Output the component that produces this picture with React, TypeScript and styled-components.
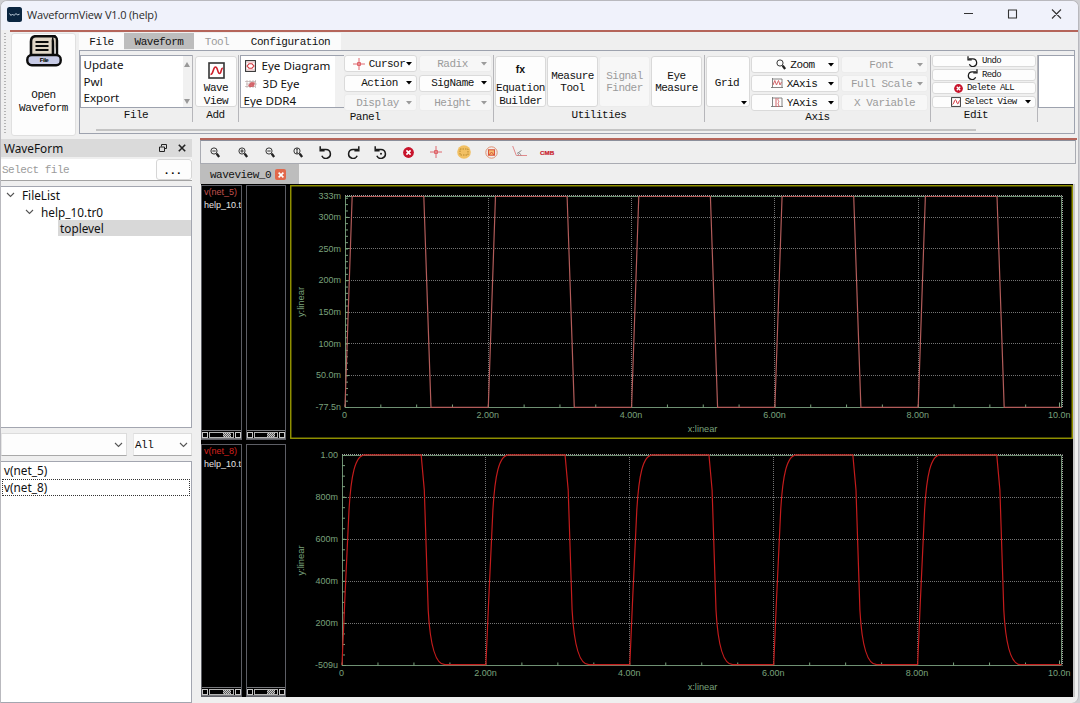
import React from "react";
import styled, { createGlobalStyle, css } from "styled-components";

const Global = createGlobalStyle`
  * { box-sizing: border-box; }
  html, body { margin: 0; padding: 0; background: #cfcfd3; overflow: hidden; }
`;

const mono = css`
  font-family: "Liberation Mono", monospace;
  font-size: 11px;
  letter-spacing: -0.5px;
`;
const sans = css`
  font-family: "Noto Sans", "Open Sans", sans-serif;
  font-size: 11.8px;
`;

const Window = styled.div`
  width: 1079px;
  height: 703px;
  border: 1px solid #b9b9be;
  border-width: 1px 1px 0 1px;
  border-radius: 7px 7px 7px 0;
  background: #efefef;
  overflow: hidden;
  display: flex;
  flex-direction: column;
  color: #111;
`;

const TitleBar = styled.header`
  height: 29px;
  flex: none;
  background: #f0f2fb;
  display: flex;
  align-items: center;
  padding: 0 2px 3px 6px;
`;
const Title = styled.span`
  font: 11px "Open Sans", "Noto Sans", sans-serif;
  letter-spacing: -0.15px;
  color: #2a2a2a;
  margin-left: 5px;
  flex: 1;
  white-space: nowrap;
`;
const RedLine = styled.div<{ $left?: number }>`
  height: 2px;
  flex: none;
  margin-left: ${(p) => p.$left ?? 0}px;
  background: #b5655a;
`;

const Ribbon = styled.section`
  height: 104px;
  flex: none;
  display: flex;
`;
const Handle = styled.div`
  width: 10px;
  flex: none;
  padding: 1px 0 0 3px;
  &::before {
    content: "";
    display: block;
    height: 101px;
    width: 2px;
    background: repeating-linear-gradient(#b4b4b4 0 1px, transparent 1px 3px);
  }
`;
const OpenButton = styled.button`
  ${mono}
  width: 65px;
  height: 103px;
  margin-top: 1px;
  padding: 1px 0 0;
  border: 1px solid #e0e0e0;
  border-radius: 3px;
  background: #fdfdfd;
  display: flex;
  flex-direction: column;
  align-items: center;
  line-height: 12.5px;
  color: #111;
  svg { margin-bottom: 22px; }
`;
const RibbonMain = styled.div`
  flex: 1;
  margin: 0 3px 0 3px;
  min-width: 0;
`;
const Tabs = styled.nav`
  display: flex;
  height: 18px;
  padding-top: 1px;
`;
const Tab = styled.span<{ $w: number; $active?: boolean; $off?: boolean }>`
  ${mono}
  width: ${(p) => p.$w}px;
  height: ${(p) => (p.$active ? 16 : 17)}px;
  line-height: 18px;
  text-align: center;
  background: ${(p) => (p.$active ? "#bdbdbd" : "#fbfbfb")};
  color: ${(p) => (p.$off ? "#9b9b9b" : "#111")};
`;
const Panel = styled.div`
  height: 84px;
  border: 1px solid #9da2ae;
  display: flex;
  flex-direction: column;
`;
const Groups = styled.div`
  display: flex;
  height: 75px;
  padding-top: 4px;
`;
const Group = styled.div<{ $w: number }>`
  width: ${(p) => p.$w}px;
  height: 67px;
  flex: none;
  border-right: 1px solid #b6b6ba;
  display: flex;
  flex-direction: column;
`;
const GroupBody = styled.div<{ $pad?: string }>`
  height: 54px;
  flex: none;
  display: flex;
  padding: ${(p) => p.$pad ?? "1px 1px 0 1px"};
`;
const GroupLabel = styled.div<{ $dy?: number; $shift?: number }>`
  ${mono}
  line-height: 12px;
  text-align: center;
  padding-right: ${(p) => p.$shift ?? 0}px;
  padding-top: ${(p) => p.$dy ?? 0}px;
`;
const ScrollTrack = styled.div`
  margin-top: 3px;
  height: 2px;
  flex: none;
  width: 880px;
  margin-left: 16px;
  background: #c4c4c4;
`;
const MenuList = styled.div<{ $w: number }>`
  ${sans}
  font-size: 11.6px;
  width: ${(p) => p.$w}px;
  height: 53px;
  flex: none;
  overflow: hidden;
  background: #fff;
  border: 1px solid #9da2ae;
  border-right: 0;
  display: flex;
  justify-content: space-between;
`;
const MenuItems = styled.div<{ $row: number }>`
  padding: 1px 0 0 2.5px;
  line-height: ${(p) => p.$row}px;
  white-space: nowrap;
`;
const MenuRow = styled.div`
  display: flex;
  align-items: center;
  svg { margin: 0 6px 0 1px; }
`;
const ArrowRail = styled.div`
  width: 9px;
  padding: 6px 1px 3px;
  background: #f1f1f1;
  display: flex;
  flex-direction: column;
  justify-content: space-between;
`;
const BigButton = styled.button<{ $w: number; $off?: boolean; $icon?: boolean }>`
  ${mono}
  width: ${(p) => p.$w}px;
  height: 51px;
  flex: none;
  padding: ${(p) => (p.$icon ? "5px 0 0" : "1px 0 0")};
  margin-right: 1px;
  border: 1px solid ${(p) => (p.$off ? "#ececec" : "#d9d9d9")};
  border-radius: 3px;
  background: ${(p) => (p.$off ? "#f7f7f7" : "#fdfdfd")};
  color: ${(p) => (p.$off ? "#9b9b9b" : "#111")};
  line-height: 12.5px;
  display: flex;
  flex-direction: column;
  align-items: center;
  justify-content: ${(p) => (p.$icon ? "flex-start" : "center")};
  white-space: nowrap;
  > svg { flex: none; margin-bottom: 3px; }
`;
const GridButton = styled(BigButton)`
  justify-content: space-between;
  padding: 20px 2px 1px 0;
  > svg { align-self: flex-end; margin: 0; }
`;
const Stack = styled.div<{ $w: number; $gap: number }>`
  width: ${(p) => p.$w}px;
  flex: none;
  display: flex;
  flex-direction: column;
  gap: ${(p) => p.$gap}px;
  margin-right: 2px;
`;
const SmallButton = styled.button<{ $h?: number; $off?: boolean; $tiny?: boolean }>`
  ${mono}
  height: ${(p) => p.$h ?? 17}px;
  flex: none;
  padding: 0 4px;
  border: 1px solid ${(p) => (p.$off ? "#ececec" : "#dadada")};
  border-radius: 3px;
  background: ${(p) => (p.$off ? "#f7f7f7" : "#fdfdfd")};
  color: ${(p) => (p.$off ? "#9b9b9b" : "#111")};
  display: flex;
  align-items: center;
  line-height: 12px;
  white-space: nowrap;
  ${(p) => p.$tiny && "font-size: 9px; letter-spacing: -0.7px; line-height: 10px;"}
`;
const ButtonText = styled.span<{ $nudge?: number }>`
  flex: 1;
  display: flex;
  align-items: center;
  justify-content: center;
  gap: 4px;
  padding-left: ${(p) => p.$nudge ?? 0}px;
`;
const FxMark = styled.b`
  font: bold 10.5px "Liberation Sans", sans-serif;
  letter-spacing: 0;
  margin: 1px 0 7px;
`;
const EditField = styled.div`
  flex: 1;
  height: 53px;
  background: #fff;
  border: 1px solid #9da2ae;
  border-right: 0;
`;

const Main = styled.main`
  flex: 1;
  display: flex;
  min-height: 0;
`;
const Sidebar = styled.aside`
  width: 191px;
  margin-right: 8px;
  flex: none;
  display: flex;
  flex-direction: column;
  padding-top: 3px;
`;
const DockHeader = styled.div`
  ${sans}
  height: 18px;
  flex: none;
  background: #dadada;
  display: flex;
  align-items: center;
  padding: 0 6px 0 3px;
  gap: 11px;
  span { flex: 1; }
`;
const FileRow = styled.div`
  display: flex;
  height: 22px;
  margin: 2px 0 5px;
  flex: none;
  border-bottom: 1px solid #a3a3a3;
  background: #fff;
`;
const FileInput = styled.div`
  ${mono}
  flex: 1;
  line-height: 22px;
  padding-left: 1px;
  color: #9b9b9b;
`;
const Browse = styled.button`
  ${mono}
  font-weight: bold;
  width: 36px;
  height: 21px;
  padding: 2px 3px 0 0;
  border: 1px solid #d6d6d6;
  border-radius: 3px;
  background: #fdfdfd;
`;
const ListBox = styled.div<{ $h?: number }>`
  ${sans}
  ${(p) => (p.$h ? `height: ${p.$h}px; flex: none;` : "flex: 1;")}
  background: #fff;
  border: 1px solid #a3a6b0;
  border-left: 0;
`;
const TreeRow = styled.div<{ $indent: number }>`
  height: 16.5px;
  line-height: 16.5px;
  display: flex;
  align-items: center;
  padding-left: ${(p) => p.$indent}px;
  svg { margin-right: 7px; }
`;
const Selected = styled.span`
  flex: 1;
  background: #d8d8d8;
  padding-left: 2px;
  height: 16px;
`;
const Combos = styled.div`
  display: flex;
  gap: 6px;
  height: 23px;
  margin: 5px 0 5px;
  flex: none;
`;
const Combo = styled.div<{ $w: number }>`
  ${mono}
  width: ${(p) => p.$w}px;
  background: #fdfdfd;
  border: 1px solid #dcdcdc;
  border-bottom-color: #a9a9a9;
  border-left-color: #e6e6e6;
  display: flex;
  align-items: center;
  justify-content: space-between;
  padding: 0 3px 0 1px;
`;
const SignalRow = styled.div<{ $focus?: boolean }>`
  height: 17px;
  line-height: 15px;
  padding-left: 1px;
  margin: 0 1px 0 1px;
  border: 1px dotted ${(p) => (p.$focus ? "#333" : "transparent")};
`;

const View = styled.section`
  width: 877px;
  flex: none;
  padding-top: 2px;
  display: flex;
  flex-direction: column;
`;
const Toolbar = styled.div`
  height: 24px;
  width: 876px;
  flex: none;
  border: 1px solid #a9abb2;
  border-top-color: #8b8f9b;
  display: flex;
  align-items: center;
`;
const ToolSlot = styled.span`
  width: 27.7px;
  display: flex;
  justify-content: center;
`;
const Cmb = styled.b`
  font: bold 6.2px "Liberation Sans", sans-serif;
  color: #c8202c;
  -webkit-text-stroke: 0.2px #c8202c;
`;
const ViewTab = styled.div`
  ${mono}
  width: 99px;
  height: 20px;
  flex: none;
  background: #bdbdbd;
  display: flex;
  align-items: center;
  padding: 1px 0 0 10px;
  gap: 4px;
`;
const CloseTab = styled.span`
  width: 11px;
  height: 11px;
  border-radius: 2px;
  background: #e2684b;
  display: flex;
  align-items: center;
  justify-content: center;
`;
const Canvas = styled.div`
  width: 872px;
  height: 513px;
  margin-left: 1px;
  background: #000;
  display: flex;
  flex-direction: column;
  padding-top: 1px;
  box-shadow: 2px 0 0 #c9c9c9;
`;
const PlotRow = styled.div<{ $h: number; $gap?: number }>`
  display: flex;
  height: ${(p) => p.$h}px;
  margin-bottom: ${(p) => p.$gap ?? 0}px;
`;
const SignalCol = styled.div<{ $w: number }>`
  width: ${(p) => p.$w}px;
  margin-right: 4px;
  flex: none;
  border: 1px solid #5d5e65;
  display: flex;
  flex-direction: column;
  justify-content: space-between;
  overflow: hidden;
`;
const SignalText = styled.div<{ $color: string }>`
  font: 9px/12.6px "Liberation Sans", sans-serif;
  color: #e6e6e6;
  padding-left: 2px;
  white-space: nowrap;
  b { font-weight: normal; color: ${(p) => p.$color}; display: block; }
`;
const MiniScroll = styled.div`
  display: flex;
  height: 9px;
  gap: 1px;
  padding-top: 1px;
  border-top: 1px solid #77787c;
  border-bottom: 1px solid #77787c;
`;
const Knob = styled.i`
  width: 6px;
  height: 6px;
  border: 1px solid #c8c8c8;
`;
const Groove = styled.i`
  flex: 1;
  height: 6px;
  border: 1px solid #b4b4b4;
  background:
    linear-gradient(90deg, #000 56%, transparent 56% 92%, #000 92%),
    repeating-conic-gradient(#c9c9c9 0 25%, #5a5a5a 0 50%) 0 0 / 2px 2px;
`;

const Chevron = () => (
  <svg width="9" height="6" viewBox="0 0 9 6"><path d="M1 1l3.5 3.5L8 1" fill="none" stroke="#555" strokeWidth="1.1" /></svg>
);
const Caret = ({ off }: { off?: boolean }) => (
  <svg width="6" height="4" viewBox="0 0 6 4"><path d="M0 0h6L3 3.6z" fill={off ? "#9b9b9b" : "#000"} /></svg>
);
const CrossIcon = () => (
  <svg width="12" height="12" viewBox="0 0 12 12" fill="none" stroke="#dc5a60" strokeWidth="0.9">
    <path d="M6 0v12M0 6h12M4.500 4.500h3v3h-3z" />
  </svg>
);
const Magnifier = ({ sign = "" }: { sign?: string }) => (
  <svg width="10" height="11" viewBox="0 0 10 11" fill="none" stroke="#222">
    <circle cx="4" cy="4" r="3.1" strokeWidth="0.9" />
    <path d="M7.100 7.300L8.600 9.200" strokeWidth="2.300" strokeLinecap="round" />
    {sign === "-" && <path d="M2.3 4h3.4" strokeWidth="0.9" />}
    {sign === "+" && <path d="M2.3 4h3.4M4 2.2v3.6" strokeWidth="0.9" />}
    {sign === "|" && <path d="M4 2v4M3.2 2h1.6M3.2 6h1.6" strokeWidth="0.9" />}
  </svg>
);
const TurnIcon = ({ flip, dot, s = 13 }: { flip?: boolean; dot?: boolean; s?: number }) => (
  <svg width={s} height={s} viewBox="0 0 13 13">
    <g transform={flip ? "matrix(-1 0 0 1 13 0)" : undefined}>
      <path d="M2 3.400H7a4.500 4.500 0 1 1-4.200 6.400" fill="none" stroke="#1b1b1b" strokeWidth="1.500" />
      <path d="M1.200.3v4.400h4.400" fill="none" stroke="#1b1b1b" strokeWidth="1.500" />
      {dot && <circle cx="7" cy="7.800" r="1" fill="#1b1b1b" />}
    </g>
  </svg>
);
const DeleteIcon = ({ s = 11 }: { s?: number }) => (
  <svg width={s} height={s} viewBox="0 0 10 10">
    <circle cx="5" cy="5" r="4.9" fill="#c8142c" />
    <path d="M3.1 3.1l3.8 3.8M6.9 3.1L3.1 6.9" stroke="#fff" strokeWidth="1.5" />
  </svg>
);
const WaveIcon = ({ s = 17 }: { s?: number }) => (
  <svg width={s} height={s} viewBox="0 0 17 17">
    <rect x="1" y="1" width="15" height="15" fill="#fff" stroke="#333" strokeWidth="1.6" />
    <path d="M2.500 12.500C5.500 12.500 5 5 7.500 5s1.800 6.500 4 6.500S12.500 6.500 14.800 6" fill="none" stroke="#cf1f2a" strokeWidth="1.600" />
  </svg>
);
const EyeIcon = () => (
  <svg width="11" height="12" viewBox="0 0 11 12" fill="none">
    <rect x=".6" y=".6" width="9.800" height="10.800" stroke="#333" strokeWidth="1.100" />
    <path d="M2 6l2-2.200h3L9 6 7 8.200H4z" stroke="#d2353d" strokeWidth="1.100" />
    <path d="M1.500 2.200h8M1.500 9.800h8" stroke="#e59a9d" strokeWidth=".7" />
  </svg>
);
const Eye3DIcon = () => (
  <svg width="12" height="8" viewBox="0 0 12 8" fill="none">
    <path d="M0 1.500h11M1 4h11M0 6.500h10M2 0v8M5 0v8M8 0v8M10.500 0v8" stroke="#b9aaa9" strokeWidth=".7" />
    <path d="M3 5.500l3-3.500 4 .5-1 4-4 .8z" fill="#cf3f45" opacity=".75" />
  </svg>
);
const AxisIcon = ({ y }: { y?: boolean }) => (
  <svg width="12" height="11" viewBox="0 0 12 11" fill="none">
    <path d="M1.500 0v10M0 9.500h12M11 1v8.500M1.500 1H11" stroke="#777" strokeWidth=".9" />
    <path d={y ? "M5 1v9M7.500 1c-2 2 1.500 3 0 4.500s1.500 3 0 4.500" : "M2 7l1.800-4.500L5.500 7l2-4.500L9 7l1.500-3"} stroke="#d4656a" strokeWidth="1" />
  </svg>
);
const FileArt = () => (
  <svg width="36" height="32" viewBox="0 0 36 32">
    <path d="M5 20V6.500Q5 1.200 10 1.200h19.500q-3 1.500-2.500 6V20" fill="#e0d6c6" stroke="#0c0c0c" strokeWidth="2.600" />
    <path d="M27 1.500q4-.5 4 4V20" fill="#d6cbba" stroke="#0c0c0c" strokeWidth="2.400" />
    <path d="M9.500 7h13M9.500 11h13M9.500 15h13" stroke="#0c0c0c" strokeWidth="1.800" />
    <rect x="1.300" y="20" width="33.400" height="10.200" rx="4.500" fill="#c7cbe6" stroke="#0c0c0c" strokeWidth="2.400" />
    <text x="18" y="27.300" textAnchor="middle" fontFamily="Liberation Sans, sans-serif" fontWeight="bold" fontSize="6.200">File</text>
  </svg>
);

const GREEN = "#7aa27c";

type PlotProps = {
  top: number;
  height: number;
  x0: number;
  yTop: number;
  yBottom: number;
  yTicks: [string, number][];
  minor: number;
  color: string;
  framed?: boolean;
  path: (x: number, step: number) => string;
};

/* Chart coordinates are window coordinates; the viewBox shifts them into the panel. */
const Plot = ({ top, height, x0, yTop, yBottom, yTicks, minor, color, framed, path }: PlotProps) => {
  const x1 = 1061.5;
  const step = (x1 - x0) / 5;
  const halves = Array.from({ length: 20 }, (_, i) => x0 + (i * step) / 4);
  const minors: number[] = [];
  for (let y = yBottom - minor; y > yTop; y -= minor) minors.push(y);
  const xLabels = ["0", "2.00n", "4.00n", "6.00n", "8.00n", "10.0n"];
  const r = (v: number) => Math.floor(v) + 0.5;
  const t0 = Math.floor(yTop);
  return (
    <svg width="783" height={height} viewBox={`290 ${top} 783 ${height}`} fontFamily="Liberation Sans, sans-serif" fontSize="9" fill={GREEN}>
      {framed && <rect x="290.750" y={top + 0.75} width="781.500" height={height - 1.5} fill="none" stroke="#979700" strokeWidth="1.400" />}
      <g stroke="#747474" strokeDasharray="1 1" fill="none">
        {yTicks.slice(1, -1).map(([, y]) => <path key={y} d={`M${x0} ${r(y)}H${x1}`} />)}
        {[1, 2, 3, 4].map((i) => <path key={i} d={`M${r(x0 + i * step)} ${t0}V${yBottom}`} />)}
        <path d={`M${x0} ${t0 - 0.5}H${x1 + 1}M${x1 + 1} ${t0}V${yBottom}`} stroke="#a0a0a0" />
      </g>
      <g stroke={GREEN} fill="none">
        <path d={`M${r(x0)} ${yTop}V${yBottom}H${x1}V${yTop}z`} stroke="#6f9073" />
        {minors.map((y) => <path key={y} d={`M${x0} ${y}h3`} />)}
        {yTicks.map(([, y]) => <path key={y} d={`M${x0} ${r(y)}h4`} />)}
        {halves.map((x) => <path key={x} d={`M${x} ${yBottom}v-3`} />)}
        <path d={`M${x1 - 2} ${yBottom}v-5`} />
      </g>
      <path d={[0, 1, 2, 3, 4].map((i) => path(x0 + i * step, step)).join("")} fill="none" stroke={color} strokeWidth="1.200" />
      {yTicks.map(([t, y]) => <text key={t} x={x0 - 4} y={y + 2.8} textAnchor="end">{t}</text>)}
      {xLabels.map((t, i) => (
        <text key={t} x={i === 5 ? 1070.5 : x0 - 0.5 + i * step} y={yBottom + 10.6} textAnchor={i === 5 ? "end" : "middle"}>{t}</text>
      ))}
      <text x="702.500" y={yBottom + 24} textAnchor="middle" fontSize="9.200">x:linear</text>
      <text transform={`translate(304 ${(yTop + yBottom) / 2}) rotate(-90)`} textAnchor="middle" fontSize="9.400">y:linear</text>
    </svg>
  );
};

const pulse = (x: number, s: number) =>
  `M${x} 407L${x + s * 0.05} 196.500H${x + s * 0.55}L${x + s * 0.6} 407.300H${x + s}`;
const charge = (x: number, s: number) =>
  `M${x} 665L${x + 2.8} 600L${x + 7} 510C${x + 9} 476 ${x + 13} 454.800 ${x + 23} 454.800` +
  `H${x + s * 0.55}L${x + 82.3} 490L${x + 86.200} 610C${x + 88} 643 ${x + 93} 664.700 ${x + 103} 664.700H${x + s}`;

const Scroller = () => (
  <MiniScroll><Knob /><Groove /><Knob /></MiniScroll>
);
const SignalColumns = ({ name, color }: { name: string; color: string }) => (
  <>
    <SignalCol $w={41}>
      <SignalText $color={color}><b>{name}</b>help_10.t</SignalText>
      <Scroller />
    </SignalCol>
    <SignalCol $w={40}><span /><Scroller /></SignalCol>
  </>
);

type DropProps = {
  text: string;
  icon?: React.ReactNode;
  off?: boolean;
  h?: number;
  tiny?: boolean;
  caret?: boolean;
  nudge?: number;
};
const Drop = ({ text, icon, off, h, tiny, caret = true, nudge }: DropProps) => (
  <SmallButton $off={off} $h={h} $tiny={tiny}>
    <ButtonText $nudge={nudge}>{icon}{text}</ButtonText>
    {caret && <Caret off={off} />}
  </SmallButton>
);

export default function App() {
  return (
    <>
      <Global />
      <Window>
        <TitleBar>
          <svg width="15" height="15" viewBox="0 0 15 15">
            <rect width="15" height="15" rx="2.500" fill="#0a2540" />
            <path d="M2.500 6.500l1.500 2 1.500-1.500 1.500 1.500 2-2 1.500 1.500 2-.8" fill="none" stroke="#d9e6f2" strokeWidth=".9" />
          </svg>
          <Title>WaveformView V1.0 (help)</Title>
          <svg width="112" height="12" viewBox="0 0 112 12" fill="none" stroke="#333" strokeWidth="1.100">
            <path d="M0 5.500h9M44.500 2h8v8h-8zM88 1.500l9 9M97 1.500l-9 9" />
          </svg>
        </TitleBar>
        <RedLine $left={9} />
        <Ribbon>
          <Handle />
          <OpenButton><FileArt /><span>Open</span><span>Waveform</span></OpenButton>
          <RibbonMain>
            <Tabs>
              <Tab $w={45}>File</Tab>
              <Tab $w={70} $active>Waveform</Tab>
              <Tab $w={46} $off>Tool</Tab>
              <Tab $w={101}>Configuration</Tab>
            </Tabs>
            <Panel>
              <Groups>
                <Group $w={113}>
                  <GroupBody $pad="0">
                    <MenuList $w={112}>
                      <MenuItems $row={16.5}><div>Update</div><div>Pwl</div><div>Export</div></MenuItems>
                      <ArrowRail>
                        <svg width="6" height="5"><path d="M0 5L3 0l3 5z" fill="#999" /></svg>
                        <svg width="6" height="5"><path d="M0 0l3 5 3-5z" fill="#999" /></svg>
                      </ArrowRail>
                    </MenuList>
                  </GroupBody>
                  <GroupLabel>File</GroupLabel>
                </Group>
                <Group $w={46}>
                  <GroupBody $pad="1px 0 0 2px">
                    <BigButton $w={42} $icon><WaveIcon /><span>Wave</span><span>View</span></BigButton>
                  </GroupBody>
                  <GroupLabel>Add</GroupLabel>
                </Group>
                <Group $w={255}>
                  <GroupBody $pad="0 0 0 1px">
                    <MenuList $w={104}>
                      <MenuItems $row={17.7}>
                        <MenuRow><EyeIcon />Eye Diagram</MenuRow>
                        <MenuRow><Eye3DIcon />3D Eye</MenuRow>
                        <div>Eye DDR4</div>
                      </MenuItems>
                      <ArrowRail />
                    </MenuList>
                    <Stack $w={73} $gap={2.5}>
                      <Drop icon={<CrossIcon />} text="Cursor" nudge={3} />
                      <Drop text="Action" nudge={4} />
                      <Drop text="Display" off />
                    </Stack>
                    <Stack $w={73} $gap={2.5}>
                      <Drop text="Radix" off />
                      <Drop text="SigName" />
                      <Drop text="Height" off />
                    </Stack>
                  </GroupBody>
                  <GroupLabel $dy={2} $shift={2}>Panel</GroupLabel>
                </Group>
                <Group $w={211}>
                  <GroupBody>
                    <BigButton $w={51} $icon><FxMark>fx</FxMark><span>Equation</span><span>Builder</span></BigButton>
                    <BigButton $w={51}><span>Measure</span><span>Tool</span></BigButton>
                    <BigButton $w={51} $off><span>Signal</span><span>Finder</span></BigButton>
                    <BigButton $w={51}><span>Eye</span><span>Measure</span></BigButton>
                  </GroupBody>
                  <GroupLabel>Utilities</GroupLabel>
                </Group>
                <Group $w={226}>
                  <GroupBody>
                    <GridButton $w={44}><span>Grid</span><Caret /></GridButton>
                    <Stack $w={88} $gap={2}>
                      <Drop icon={<Magnifier />} text="Zoom" nudge={7} />
                      <Drop icon={<AxisIcon />} text="XAxis" nudge={4} />
                      <Drop icon={<AxisIcon y />} text="YAxis" nudge={4} />
                    </Stack>
                    <Stack $w={87} $gap={2}>
                      <Drop text="Font" off />
                      <Drop text="Full Scale" off />
                      <Drop text="X Variable" off caret={false} />
                    </Stack>
                  </GroupBody>
                  <GroupLabel $dy={2}>Axis</GroupLabel>
                </Group>
                <Group $w={107}>
                  <GroupBody $pad="0 1px">
                    <Stack $w={104} $gap={1.7}>
                      <Drop h={12} tiny caret={false} icon={<TurnIcon s={11} />} text="Undo" />
                      <Drop h={12} tiny caret={false} icon={<TurnIcon flip s={11} />} text="Redo" />
                      <Drop h={12} tiny caret={false} icon={<DeleteIcon s={9} />} text="Delete ALL" />
                      <Drop h={12} tiny icon={<WaveIcon s={10} />} text="Select View" nudge={5} />
                    </Stack>
                  </GroupBody>
                  <GroupLabel $shift={16}>Edit</GroupLabel>
                </Group>
                <EditField />
              </Groups>
              <ScrollTrack />
            </Panel>
          </RibbonMain>
        </Ribbon>
        <Main>
          <Sidebar>
            <DockHeader>
              <span>WaveForm</span>
              <svg width="8" height="8" viewBox="0 0 8 8" fill="none" stroke="#222"><path d="M2.500 2.500v-2h5v4h-2M.5 3h5v4.500h-5z" /></svg>
              <svg width="8" height="8" viewBox="0 0 8 8" stroke="#222" strokeWidth="1.600"><path d="M.8.8l6.400 6.400M7.200.8L.8 7.200" /></svg>
            </DockHeader>
            <FileRow><FileInput>Select file</FileInput><Browse>...</Browse></FileRow>
            <ListBox $h={242}>
              <TreeRow $indent={5}><Chevron />FileList</TreeRow>
              <TreeRow $indent={24}><Chevron />help_10.tr0</TreeRow>
              <TreeRow $indent={57}><Selected>toplevel</Selected></TreeRow>
            </ListBox>
            <Combos>
              <Combo $w={126}><span /><Chevron /></Combo>
              <Combo $w={59}>All<Chevron /></Combo>
            </Combos>
            <ListBox>
              <SignalRow>v(net_5)</SignalRow>
              <SignalRow $focus>v(net_8)</SignalRow>
            </ListBox>
          </Sidebar>
          <View>
            <RedLine />
            <Toolbar>
              <ToolSlot><Magnifier sign="-" /></ToolSlot>
              <ToolSlot><Magnifier sign="+" /></ToolSlot>
              <ToolSlot><Magnifier sign="-" /></ToolSlot>
              <ToolSlot><Magnifier sign="|" /></ToolSlot>
              <ToolSlot><TurnIcon /></ToolSlot>
              <ToolSlot><TurnIcon flip /></ToolSlot>
              <ToolSlot><TurnIcon dot /></ToolSlot>
              <ToolSlot><DeleteIcon /></ToolSlot>
              <ToolSlot><CrossIcon /></ToolSlot>
              <ToolSlot>
                <svg width="14" height="14" viewBox="0 0 14 14"><circle cx="7" cy="7" r="6.800" fill="#f2c063" /><rect x="3" y="4" width="8" height="6" fill="none" stroke="#b98a2e" strokeDasharray="1.500 1" /></svg>
              </ToolSlot>
              <ToolSlot>
                <svg width="13" height="13" viewBox="0 0 13 13" fill="none"><circle cx="6.500" cy="6.500" r="5.700" stroke="#e09070" /><rect x="3.500" y="3.800" width="6" height="5.400" fill="#f5bd6e" stroke="#d9553c" strokeWidth="1.100" /><path d="M4 9l2.500-3L9 9" stroke="#d9553c" /></svg>
              </ToolSlot>
              <ToolSlot>
                <svg width="15" height="12" viewBox="0 0 15 12" fill="none"><path d="M.7 0l3.600 9.500M4.300 9.500H15" stroke="#e0898b" strokeWidth="1" /><path d="M5 7.500l4.500-3M6 9.500c1-3 2-3 3 0" stroke="#777" strokeWidth=".8" /></svg>
              </ToolSlot>
              <ToolSlot><Cmb>CMB</Cmb></ToolSlot>
            </Toolbar>
            <ViewTab>
              waveview_0
              <CloseTab><svg width="6" height="6" viewBox="0 0 6 6" stroke="#fff" strokeWidth="1.600"><path d="M.6.6l4.800 4.800M5.400.6L.6 5.400" /></svg></CloseTab>
            </ViewTab>
            <Canvas>
              <PlotRow $h={255} $gap={4}>
                <SignalColumns name="v(net_5)" color="#c4504c" />
                <Plot
                  framed top={185} height={254} x0={345} yTop={196.5} yBottom={407.5} minor={6.34} color="#b25c5a"
                  yTicks={[["333m", 196.5], ["300m", 217], ["250m", 248.7], ["200m", 280.4], ["150m", 312.1], ["100m", 343.9], ["50.0m", 375.6], ["-77.5n", 407.5]]}
                  path={pulse}
                />
              </PlotRow>
              <PlotRow $h={253}>
                <SignalColumns name="v(net_8)" color="#d8201c" />
                <Plot
                  top={444} height={253} x0={342} yTop={455.5} yBottom={665.5} minor={10.52} color="#c41c1c"
                  yTicks={[["1.00", 455], ["800m", 497], ["600m", 539], ["400m", 581], ["200m", 623], ["-509u", 665.5]]}
                  path={charge}
                />
              </PlotRow>
            </Canvas>
          </View>
        </Main>
      </Window>
    </>
  );
}
